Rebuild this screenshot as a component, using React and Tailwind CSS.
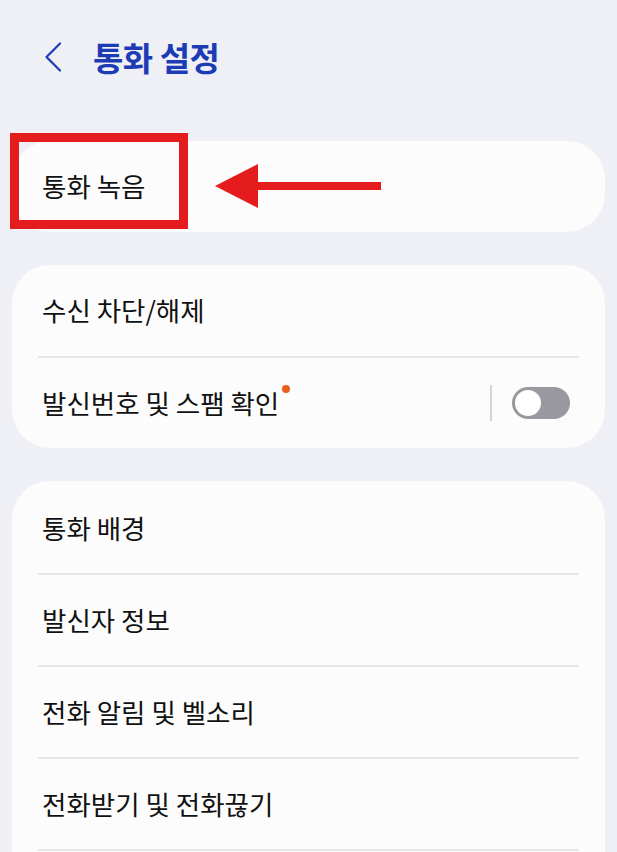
import React from "react";

const font = { fontFamily: '"Noto Sans CJK KR", "Noto Sans", sans-serif' };

function Divider() {
  return <div className="mx-[26px] h-[2px] bg-[#e6e6e8]" />;
}

function Row({ children, h = "h-[91px]" }) {
  return (
    <div className={`flex ${h} items-center px-[30px] text-[26.5px] leading-none text-[#111111]`}>
      {children}
    </div>
  );
}

export default function App() {
  return (
    <div className="min-h-[852px] w-[617px] overflow-hidden bg-[#eff0f5]" style={font}>
      {/* Header */}
      <div className="flex h-[114px] items-center pl-[44px]">
        <svg width="18" height="30" viewBox="0 0 18 30" className="mr-[31px]">
          <path d="M16 1.5 L2.5 15 L16 28.5" fill="none" stroke="#1c3bb5" strokeWidth="2.2" strokeLinecap="round" strokeLinejoin="round" />
        </svg>
        <h1 className="text-[33px] font-bold leading-none tracking-[-0.5px] text-[#1c3bb5]">통화 설정</h1>
      </div>

      <div className="flex flex-col gap-[33px] px-[12px] pt-[27px]">
        {/* Card 1 */}
        <div className="relative rounded-[38px] bg-[#fcfcfc]">
          <Row>통화 녹음</Row>
          <div className="absolute left-[-2px] top-[-8px] h-[96px] w-[178px] border-[9px] border-[#e41c1e]" />
          <svg className="absolute left-[203px] top-[23px]" width="168" height="45" viewBox="0 0 168 45">
            <polygon points="0,22 43,0 43,44" fill="#e41c1e" />
            <rect x="42" y="18" width="124" height="8" fill="#e41c1e" />
          </svg>
        </div>

        {/* Card 2 */}
        <div className="rounded-[38px] bg-[#fcfcfc]">
          <Row h="h-[91px]">수신 차단/해제</Row>
          <Divider />
          <div className="flex h-[90px] items-center pl-[30px] pr-[35px] text-[26.5px] leading-none text-[#111111]">
            <div className="relative">
              발신번호 및 스팸 확인
              <span className="absolute right-[-11px] top-[-5px] h-[8px] w-[8px] rounded-full bg-[#e8601c]" />
            </div>
            <div className="ml-auto h-[36px] w-[2px] bg-[#d4d4d6]" />
            <div className="ml-[20px] flex h-[32px] w-[58px] items-center rounded-full bg-[#98989e] px-[3px]">
              <div className="h-[26px] w-[26px] rounded-full bg-white" />
            </div>
          </div>
        </div>

        {/* Card 3 */}
        <div className="rounded-t-[38px] bg-[#fcfcfc] pt-[2px]">
          <Row h="h-[90px]">통화 배경</Row>
          <Divider />
          <Row h="h-[90px]">발신자 정보</Row>
          <Divider />
          <Row h="h-[90px]">전화 알림 및 벨소리</Row>
          <Divider />
          <Row h="h-[90px]">전화받기 및 전화끊기</Row>
          <Divider />
          <div className="h-[40px]" />
        </div>
      </div>
    </div>
  );
}
